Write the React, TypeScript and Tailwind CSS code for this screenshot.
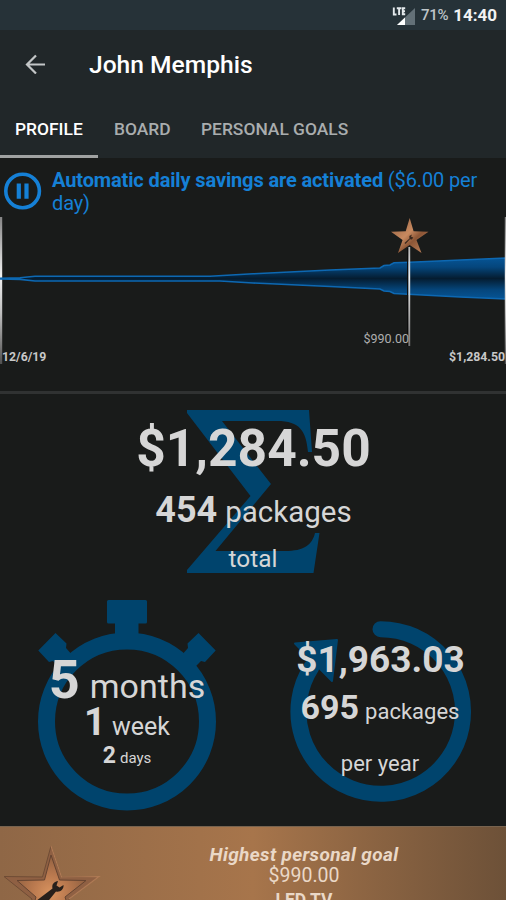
import type { ReactNode } from "react";

const BLUE = "#00446d";

function StatusBar() {
  return (
    <div className="flex h-[30px] items-center justify-end bg-[#263238] pt-px pr-[9px]">
      <svg width="24" height="20" viewBox="392 5 24 20" className="mr-[5px]">
        <path d="M397 24 L415 24 L415 7 Z" fill="#637077" />
        <path d="M397 24 L405 24 L405 16.5 Z" fill="#fff" />
        <path d="M393.8 6.5v7h2.7M396.8 7.2h4.6M399.1 7v7M405.2 7.2h-2.4v6.1h2.4M402.8 10.2h2.2" fill="none" stroke="#e4e9ec" strokeWidth="1.9" />
      </svg>
      <span className="mr-[5px] text-[15px] leading-none font-medium tracking-[-0.3px] text-[#bfc5c9]">71%</span>
      <span className="text-[17px] leading-none font-bold text-[#f1f3f4]">14:40</span>
    </div>
  );
}

function Header() {
  return (
    <header className="h-[128px] bg-[#212729]">
      <div className="flex h-[71px] items-center">
        <svg width="22" height="20" viewBox="24 54 22 20" className="-mt-[3px] mr-[43px] ml-6" fill="none" stroke="#c3c6c7" strokeWidth="2.2">
          <path d="M45 64.5H27M36 55.5L27 64.5L36 73.5" />
        </svg>
        <h1 className="text-[24.6px] leading-none font-medium text-white">John Memphis</h1>
      </div>
      <nav className="flex h-[57px] text-[17.4px] leading-[57px] font-medium text-[#a9adae]">
        <div className="w-[98px] border-b-3 border-[#a0a2a2] pl-[15px] text-white">PROFILE</div>
        <div className="w-[87px] pl-[16px]">BOARD</div>
        <div className="pl-[16px] whitespace-nowrap">PERSONAL GOALS</div>
      </nav>
    </header>
  );
}

function Notice() {
  return (
    <div className="flex h-[58px] pt-[11px] text-[#1580d6]">
      <svg width="38" height="38" viewBox="0 0 38 38" className="mt-[3px] mr-[10px] ml-1 shrink-0">
        <circle cx="18.6" cy="19" r="16.8" fill="none" stroke="#1580d6" strokeWidth="3.6" />
        <path d="M12.7 11.5h4.2v15.3h-4.2zM20.4 11.5h4.2v15.3h-4.2z" fill="#1580d6" />
      </svg>
      <p className="text-[20px] leading-[23px] tracking-[-0.13px]">
        <b>Automatic daily savings are activated</b> ($6.00 per
        <br />
        day)
      </p>
    </div>
  );
}

function Chart() {
  return (
    <div className="relative h-[175px]">
      <svg width="506" height="175" viewBox="0 216 506 175" className="block">
        <defs>
          <linearGradient id="wave" x1="0" y1="258" x2="0" y2="299" gradientUnits="userSpaceOnUse">
            <stop offset="0" stopColor="#065495" />
            <stop offset=".22" stopColor="#05467c" />
            <stop offset=".5" stopColor="#051c30" />
            <stop offset=".78" stopColor="#05467c" />
            <stop offset="1" stopColor="#065495" />
          </linearGradient>
          <linearGradient id="edge" x1="0" y1="217" x2="0" y2="364" gradientUnits="userSpaceOnUse">
            <stop offset="0" stopColor="#858585" />
            <stop offset=".4" stopColor="#f0f0f0" />
            <stop offset=".65" stopColor="#c0c0c0" />
            <stop offset="1" stopColor="#505050" />
          </linearGradient>
          <linearGradient id="pin" x1="0" y1="248" x2="0" y2="346" gradientUnits="userSpaceOnUse">
            <stop offset="0" stopColor="#b8b8b8" />
            <stop offset=".3" stopColor="#f0f0f0" />
            <stop offset="1" stopColor="#777" />
          </linearGradient>
          <linearGradient id="smallStar" x1="0" y1="0" x2="1" y2="1">
            <stop offset="0" stopColor="#8a5a3c" />
            <stop offset=".45" stopColor="#c88a60" />
            <stop offset=".62" stopColor="#8c5636" />
            <stop offset="1" stopColor="#c98b63" />
          </linearGradient>
        </defs>
        <path d="M0 217h2.2v147H0z" fill="url(#edge)" />
        <path
          d="M0 278.2 L20 277.8 L35 276.2 L210 276.2 L253 273.8 L330 270 L380 268 L384 265.5 L390 265 L394 262.8 L410 262.3 L506 258 V299 L460 297 L394 293.5 L390 291.5 L384 291 L380 289 L330 286.5 L253 283 L220 281 L35 281 L20 279.4 L0 279 Z"
          fill="url(#wave)"
          stroke="#0d68b2"
          strokeWidth="1.6"
        />
        <path d="M504.8 217h1.2v147h-1.2z" fill="url(#edge)" />
        <path d="M407 248h1.2v98H407z" fill="#0b0c0c" />
        <path d="M408.4 247h1.8v99h-1.8z" fill="url(#pin)" />
        <path d="M409.7 218L413.6 231.3L428.5 231.8L416.5 240L421.5 253L409.7 245L398 253L402.6 240L391 231.8L405.7 231.3Z" fill="url(#smallStar)" />
        <path d="M404.5 243l5-4.5-.2-2.6 2.6-1.4-.8 2.2 2.2.7-1.4 2-2-.1-4.4 4.6z" fill="#38271d" />
      </svg>
      <span className="absolute top-[116px] right-[97px] text-[12.5px] leading-[14px] text-[#aeaeae]">$990.00</span>
      <span className="absolute top-[134px] left-[2px] text-[12.3px] leading-[14px] font-bold text-[#c8c8c8]">12/6/19</span>
      <span className="absolute top-[134px] right-px text-[12.3px] leading-[14px] font-bold text-[#c8c8c8]">$1,284.50</span>
    </div>
  );
}

function Line({ className, children }: { className: string; children: ReactNode }) {
  return <div className={`flex items-baseline justify-center leading-none whitespace-nowrap ${className}`}>{children}</div>;
}

function Total() {
  return (
    <section className="relative h-[196px] pt-[29px]">
      <svg width="506" height="196" viewBox="0 394 506 196" className="absolute inset-0">
        <path
          d="M187 410H309L312 452H308C306 431 300 421 277 421H222L271 484L215.5 551H285C304 551 312 545 315 533H319.5L313.5 573H187V570L250.5 496L187 413Z"
          fill={BLUE}
        />
      </svg>
      <div className="relative">
        <Line className="h-[51px] pl-px">
          <b className="text-[51.5px]">$1,284.50</b>
        </Line>
        <Line className="mt-[18px] h-9 pl-px">
          <b className="mr-2 text-[36px]">454</b>
          <span className="text-[29.5px]">packages</span>
        </Line>
        <Line className="mt-[19px]">
          <span className="text-[24.4px]">total</span>
        </Line>
      </div>
    </section>
  );
}

function Elapsed() {
  return (
    <div className="relative w-[253px] pt-[62px]">
      <svg width="253" height="236" viewBox="0 590 253 236" className="absolute inset-0">
        <circle cx="127" cy="721.5" r="80.5" fill="none" stroke={BLUE} strokeWidth="17" />
        <rect x="107" y="600" width="40" height="23.5" rx="1.5" fill={BLUE} />
        <path d="M115 622h23.5v16H115z" fill={BLUE} />
        <path d="M55.5 633L66.5 643.5L66 648L73 656L60 668L53 661L49 662L38.3 650.5Z" fill={BLUE} />
        <path d="M198.5 633L187.5 643.5L188 648L181 656L194 668L201 661L205 662L215.7 650.5Z" fill={BLUE} />
      </svg>
      <div className="relative">
        <Line className="mt-px h-[54px] pl-px">
          <b className="mr-[10px] text-[54px]">5</b>
          <span className="text-[34px]">months</span>
        </Line>
        <Line className="-mt-1 h-[38px] pl-px">
          <b className="mr-[6px] text-[38px]">1</b>
          <span className="text-[25px]">week</span>
        </Line>
        <Line className="mt-[3px] pl-px">
          <b className="mr-[4px] text-[23px]">2</b>
          <span className="text-[15px]">days</span>
        </Line>
      </div>
    </div>
  );
}

function PerYear() {
  return (
    <div className="relative w-[253px] pt-[51px]">
      <svg width="253" height="236" viewBox="253 590 253 236" className="absolute inset-0">
        <path d="M380.5 629.2A82.3 82.3 0 1 1 311.5 667" fill="none" stroke={BLUE} strokeWidth="16" strokeLinecap="round" />
        <path d="M295 643.5L337 640L332 681Z" fill={BLUE} stroke={BLUE} strokeWidth="2" strokeLinejoin="round" />
      </svg>
      <div className="relative">
        <Line className="h-[37px] pl-[2px]">
          <b className="text-[37px]">$1,963.03</b>
        </Line>
        <Line className="mt-[12px] h-[34px] pl-px">
          <b className="mr-[6px] text-[34px]">695</b>
          <span className="text-[22px]">packages</span>
        </Line>
        <Line className="mt-[29px] pl-px">
          <span className="text-[22px]">per year</span>
        </Line>
      </div>
    </div>
  );
}

function Goal() {
  return (
    <section className="flex h-[74px] overflow-hidden border-t border-[#77634f] bg-linear-to-r from-[#8f6746] via-[#a7754b] to-[#6d5138]">
      <svg width="102" height="110" viewBox="0 827 102 110" className="shrink-0">
        <defs>
          <radialGradient id="bronze" cx="50" cy="893" r="42" gradientUnits="userSpaceOnUse">
            <stop offset="0" stopColor="#d9935f" />
            <stop offset=".45" stopColor="#b8784e" />
            <stop offset="1" stopColor="#875b3e" />
          </radialGradient>
        </defs>
        <path d="M51 846L61.5 877L99 876.5L69 899L80 935L51 913L22 935L32 899L4 876.5L42.5 877Z" fill="#8f6043" stroke="#6f4c35" strokeWidth="1" />
        <path d="M51 846L61.5 877L99 876.5L69 899" fill="none" stroke="#b07b55" strokeWidth="1.2" />
        <path d="M51 855L59.5 880L86 880.5L65 897L74 925L51 908L28 925L36 897L17 880.5L44.5 880Z" fill="url(#bronze)" stroke="#654431" strokeWidth="1" />
        <path d="M36 901L52.5 888.5C51.5 884.5 54 881.5 58 881L56.5 885.5L59.5 887.5L63.5 885C64 889 60.5 892.5 56 891.5L45 905Z" fill="#28201b" />
      </svg>
      <div className="flex grow flex-col items-center leading-none whitespace-nowrap text-[#ead8c7]">
        <b className="mt-[18px] text-[19px] tracking-[0.35px] italic">Highest personal goal</b>
        <span className="mt-[2px] text-[19.5px]">$990.00</span>
        <b className="mt-[6px] text-[17.5px]">LED TV</b>
      </div>
    </section>
  );
}

export default function App() {
  return (
    <main className="flex h-[900px] w-[506px] flex-col overflow-hidden bg-[#191b1a] font-['Roboto',sans-serif] text-[#d6d6d6]">
      <StatusBar />
      <Header />
      <Notice />
      <Chart />
      <div className="h-[3px] bg-[#303232]" />
      <Total />
      <div className="flex h-[236px]">
        <Elapsed />
        <PerYear />
      </div>
      <Goal />
    </main>
  );
}
